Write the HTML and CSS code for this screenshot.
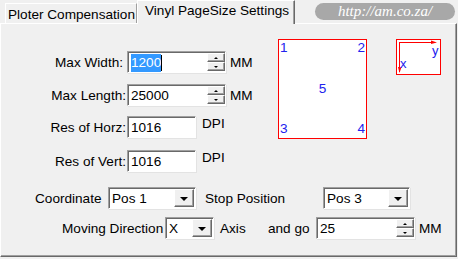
FILE: index.html
```html
<!DOCTYPE html>
<html lang="en">
<head>
    <meta charset="UTF-8">
    <title>Vinyl PageSize Settings</title>
    <link rel="stylesheet" href="styles.css">
</head>
<body>
    <!-- Вкладки -->
    <div class="tabbar">
        <div class="tab">Ploter Compensation</div>
        <div class="tab active">Vinyl PageSize Settings</div>
        <div class="url">http://am.co.za/</div>
    </div>

    <!-- Панель настроек -->
    <div class="panel">
        <div class="top">
            <div class="fields">
                <div class="frow r1">
                    <label class="lbl lbl-w">Max Width:</label>
                    <div class="edit w-spin">
                        <span class="val"><span class="sel">1200</span><span class="caret"></span></span>
                        <div class="spin"><b class="up"></b><b class="down"></b></div>
                    </div>
                    <span class="unit">MM</span>
                </div>
                <div class="frow r2">
                    <label class="lbl">Max Length:</label>
                    <div class="edit w-spin">
                        <span class="val">25000</span>
                        <div class="spin"><b class="up"></b><b class="down"></b></div>
                    </div>
                    <span class="unit">MM</span>
                </div>
                <div class="frow r3">
                    <label class="lbl">Res of Horz:</label>
                    <div class="edit w-res"><span class="val">1016</span></div>
                    <span class="unit dpi">DPI</span>
                </div>
                <div class="frow r4">
                    <label class="lbl">Res of Vert:</label>
                    <div class="edit w-res"><span class="val">1016</span></div>
                    <span class="unit dpi">DPI</span>
                </div>
            </div>

            <!-- Схема страницы -->
            <div class="preview">
                <div class="page">
                    <div class="prow"><span>1</span><span>2</span></div>
                    <div class="prow mid"><span>5</span></div>
                    <div class="prow"><span>3</span><span>4</span></div>
                </div>
                <div class="axes">
                    <svg width="44" height="35" viewBox="0 0 44 35">
                        <line x1="3" y1="3.5" x2="39" y2="3.5" stroke="#f00" stroke-width="1"/>
                        <polygon points="35,1.5 41,3.5 35,5" fill="#f00"/>
                        <line x1="3.5" y1="3" x2="3.5" y2="33" stroke="#f00" stroke-width="1"/>
                        <polygon points="2,28 3.5,34 5.5,28" fill="#f00"/>
                        <text x="36" y="16" class="ax">y</text>
                        <text x="4" y="29" class="ax">x</text>
                    </svg>
                </div>
            </div>
        </div>

        <div class="row row-coord">
            <span class="lbl-coord">Coordinate</span>
            <div class="combo w-coord">
                <span class="val">Pos 1</span>
                <div class="drop"><i></i></div>
            </div>
            <span class="lbl-stop">Stop Position</span>
            <div class="combo w-stop">
                <span class="val">Pos 3</span>
                <div class="drop"><i></i></div>
            </div>
        </div>

        <div class="row row-move">
            <span class="lbl-move">Moving Direction</span>
            <div class="combo w-dir">
                <span class="val">X</span>
                <div class="drop"><i></i></div>
            </div>
            <span class="lbl-axis">Axis</span>
            <span class="lbl-go">and go</span>
            <div class="edit w-go">
                <span class="val">25</span>
                <div class="spin"><b class="up"></b><b class="down"></b></div>
            </div>
            <span class="unit">MM</span>
        </div>
    </div>
</body>
</html>
```

FILE: styles.css
```css
body {
    margin: 0;
    width: 458px;
    height: 259px;
    overflow: hidden;
    background: #f0f0f0;
    font-family: 'Liberation Sans', Arial, sans-serif;
    font-size: 13.6px;
    color: #000;
}

/* Вкладки */
.tabbar {
    display: flex;
    align-items: flex-end;
    height: 23px;
    padding-left: 5px;
}

.tab {
    box-sizing: border-box;
    width: 132px;
    height: 20px;
    padding: 2px 0 0 2px;
    border: 1px solid;
    border-color: #fff #a0a0a0 transparent #fff;
    border-bottom: none;
    line-height: 17px;
    white-space: nowrap;
}

.tab.active {
    width: 158px;
    height: 24px;
    margin-bottom: -1px;
    padding: 0 0 0 7px;
    line-height: 20px;
    background: #f0f0f0;
    border-color: #fff #696969 transparent #fff;
    box-shadow: inset -1px 0 #a0a0a0;
    position: relative;
    z-index: 1;
}

.url {
    align-self: flex-start;
    margin: 3px 3px 0 auto;
    width: 140px;
    height: 17px;
    border-radius: 9px;
    background: #a8a8a8;
    color: #fff;
    font-family: 'Liberation Serif', 'Times New Roman', serif;
    font-style: italic;
    font-size: 15px;
    line-height: 17px;
    text-align: center;
}

/* Панель */
.panel {
    box-sizing: border-box;
    width: 457px;
    height: 234px;
    padding-top: 15px;
    border: 1px solid;
    border-color: #fff #696969 #696969 #fff;
    box-shadow: inset -1px -1px #a0a0a0;
}

.top {
    display: flex;
    align-items: flex-start;
}

.fields {
    width: 277px;
    padding-top: 12px;
}

.frow {
    display: flex;
    align-items: center;
    height: 22px;
}

.r2 { margin-top: 11px; }
.r3 { margin-top: 10px; }
.r4 { margin-top: 12px; }

.lbl {
    box-sizing: border-box;
    width: 126px;
    padding-right: 1px;
    text-align: right;
    white-space: nowrap;
}

.lbl-w {
    padding-right: 4px;
}

/* Поля ввода */
.edit,
.combo {
    box-sizing: border-box;
    display: flex;
    height: 22px;
    background: #fff;
    border: 1px solid;
    border-color: #a0a0a0 #fff #fff #a0a0a0;
    box-shadow: inset 1px 1px #696969, 1px 1px #e3e3e3;
}

.val {
    flex: 1;
    display: flex;
    align-items: center;
    padding-left: 3px;
    padding-top: 1px;
    white-space: nowrap;
}

.sel {
    background: #3399ff;
    color: #fff;
    line-height: 18px;
}

.caret {
    width: 1px;
    height: 16px;
    background: #000;
}

.w-spin { width: 99px; }
.w-res { width: 69px; }
.w-go { width: 99px; }

.spin {
    display: flex;
    flex-direction: column;
    width: 18px;
    padding: 1px 0;
}

.spin b {
    flex: 1;
    display: flex;
    align-items: center;
    justify-content: center;
    background: #f0f0f0;
    border: 1px solid;
    border-color: #fff #696969 #696969 #fff;
    box-shadow: inset -1px -1px #a0a0a0;
}

.spin b::after {
    content: '';
    width: 0;
    height: 0;
    border-left: 2px solid transparent;
    border-right: 2px solid transparent;
}

.spin .up::after {
    border-bottom: 2px solid #000;
}

.spin .down::after {
    border-top: 2px solid #000;
}

.unit {
    margin-left: 4px;
}

.unit.dpi {
    align-self: flex-start;
    margin-left: 6px;
    line-height: 16px;
}

/* Схема страницы */
.preview {
    display: flex;
    align-items: flex-start;
}

.page {
    box-sizing: border-box;
    width: 89px;
    height: 100px;
    display: flex;
    flex-direction: column;
    justify-content: space-between;
    background: #fff;
    border: 1px solid #f00;
    color: #2222ee;
    line-height: 14px;
    padding: 1px 1px 2px 1px;
}

.prow {
    display: flex;
    justify-content: space-between;
}

.prow.mid {
    justify-content: center;
}

.axes {
    margin-left: 29px;
    box-sizing: border-box;
    width: 45px;
    height: 36px;
    background: #fff;
    border: 1px solid #f00;
}

.axes svg {
    display: block;
    margin: -1px;
}

.ax {
    fill: #2222ee;
    font-family: 'Liberation Sans', Arial, sans-serif;
    font-size: 13px;
}

/* Нижние строки */
.row {
    display: flex;
    align-items: center;
    height: 22px;
}

.row-coord {
    margin-top: 15px;
    padding-left: 34px;
}

.row-move {
    margin-top: 8px;
    padding-left: 61px;
}

.lbl-coord { width: 73px; white-space: nowrap; }
.lbl-stop { width: 118px; margin-left: 9px; white-space: nowrap; }
.lbl-move { width: 103px; white-space: nowrap; }
.lbl-axis { width: 48px; margin-left: 6px; }
.lbl-go { width: 48px; white-space: nowrap; }

.w-coord { width: 88px; }
.w-stop { width: 87px; }
.w-dir { width: 49px; }

.drop {
    box-sizing: border-box;
    width: 20px;
    margin: 1px 1px 1px 0;
    display: flex;
    align-items: center;
    justify-content: center;
    background: #f0f0f0;
    border: 1px solid;
    border-color: #fff #696969 #696969 #fff;
    box-shadow: inset -1px -1px #a0a0a0;
}

.drop i {
    width: 0;
    height: 0;
    border-left: 4px solid transparent;
    border-right: 4px solid transparent;
    border-top: 4px solid #000;
    margin-top: 1px;
}
```
